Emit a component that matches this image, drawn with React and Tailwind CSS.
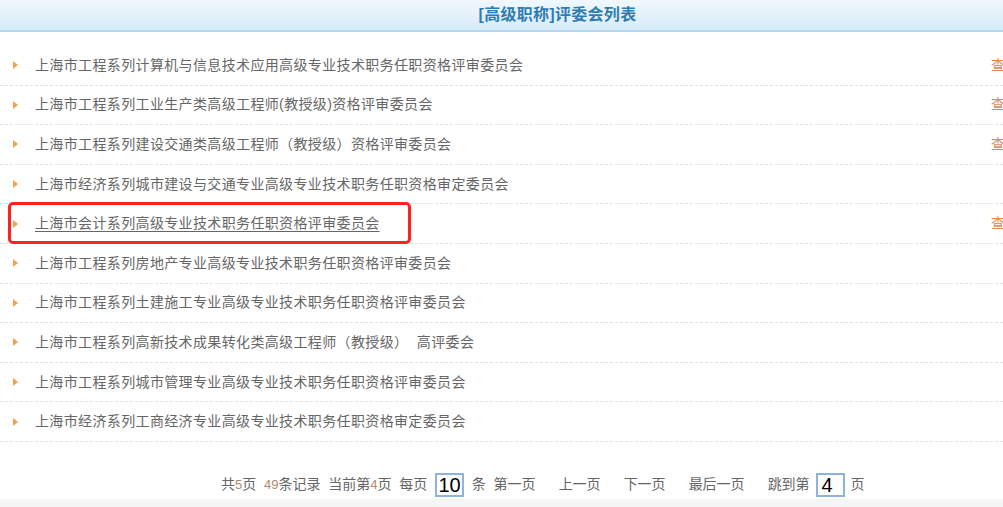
const rows = [
  { name: "上海市工程系列计算机与信息技术应用高级专业技术职务任职资格评审委员会", link: true },
  { name: "上海市工程系列工业生产类高级工程师(教授级)资格评审委员会", link: true },
  { name: "上海市工程系列建设交通类高级工程师（教授级）资格评审委员会", link: true },
  { name: "上海市经济系列城市建设与交通专业高级专业技术职务任职资格审定委员会", link: false },
  { name: "上海市会计系列高级专业技术职务任职资格评审委员会", link: true, active: true },
  { name: "上海市工程系列房地产专业高级专业技术职务任职资格评审委员会", link: false },
  { name: "上海市工程系列土建施工专业高级专业技术职务任职资格评审委员会", link: false },
  { name: "上海市工程系列高新技术成果转化类高级工程师（教授级）  高评委会", link: false },
  { name: "上海市工程系列城市管理专业高级专业技术职务任职资格评审委员会", link: false },
  { name: "上海市经济系列工商经济专业高级专业技术职务任职资格审定委员会", link: false },
];

const font = { fontFamily: '"Liberation Sans", "Noto Sans CJK SC", sans-serif' };

const Bullet = () => (
  <svg width="5" height="8" viewBox="0 0 5 8" className="shrink-0">
    <path d="M0 0 L5 4 L0 8 Z" fill="#f5a04a" />
  </svg>
);

const Num = ({ children }) => (
  <span className="text-[#b08a6a] text-[13px]">{children}</span>
);

const Box = ({ value, w }) => (
  <span
    className={`inline-flex items-center justify-center h-[24px] border-2 border-[#8fb3e0] bg-white text-black text-[20px] leading-none ${w}`}
  >
    {value}
  </span>
);

const App = () => {
  return (
    <div className="w-[1003px] h-[507px] overflow-hidden bg-white text-[14px] text-[#666]" style={font}>
      <div className="h-[32px] bg-gradient-to-b from-[#f0f8fd] to-[#d7ebf8] border-b-2 border-[#b3d8f2] flex items-center justify-center pl-[112px]">
        <h1 className="text-[16px] font-bold text-[#2f7cb4] tracking-[0.3px] whitespace-nowrap">[高级职称]评委会列表</h1>
      </div>

      <div className="mt-[14px]">
        {rows.map((r, i) => (
          <div
            key={i}
            className="h-[39.6px] flex items-center border-b border-dashed border-[#e2e2e2] relative whitespace-pre"
          >
            <div className="w-[35px] flex justify-end pr-[17px]">
              <Bullet />
            </div>
            <span className={`tracking-[0.36px] ${r.active ? "underline underline-offset-[3px]" : ""}`}>{r.name}</span>
            {r.link && (
              <span className="absolute left-[991px] text-[#e0874f] whitespace-nowrap">查看</span>
            )}
            {r.active && (
              <div className="absolute left-[8px] top-[-2px] w-[403px] h-[42px] border-[3px] border-[#ff2222] rounded-[5px] pointer-events-none" />
            )}
          </div>
        ))}
      </div>

      <div className="h-[57px] flex items-end pb-[2px]">
        <div className="flex items-center pl-[221px] whitespace-pre">
          <span>共<Num>5</Num>页  <Num>49</Num>条记录  当前第<Num>4</Num>页  每页  </span>
          <Box value="10" w="w-[29px]" />
          <span>  条  第一页</span>
          <span className="ml-[23px]">上一页</span>
          <span className="ml-[23px]">下一页</span>
          <span className="ml-[23px]">最后一页</span>
          <span className="ml-[23px]">跳到第 </span>
          <Box value="4" w="w-[29px] justify-start pl-[4px] ml-[2px]" />
          <span className="ml-[6px]">页</span>
        </div>
      </div>
      <div className="h-[8px] bg-[#f5f5f5]" />
    </div>
  );
};

export default App;
